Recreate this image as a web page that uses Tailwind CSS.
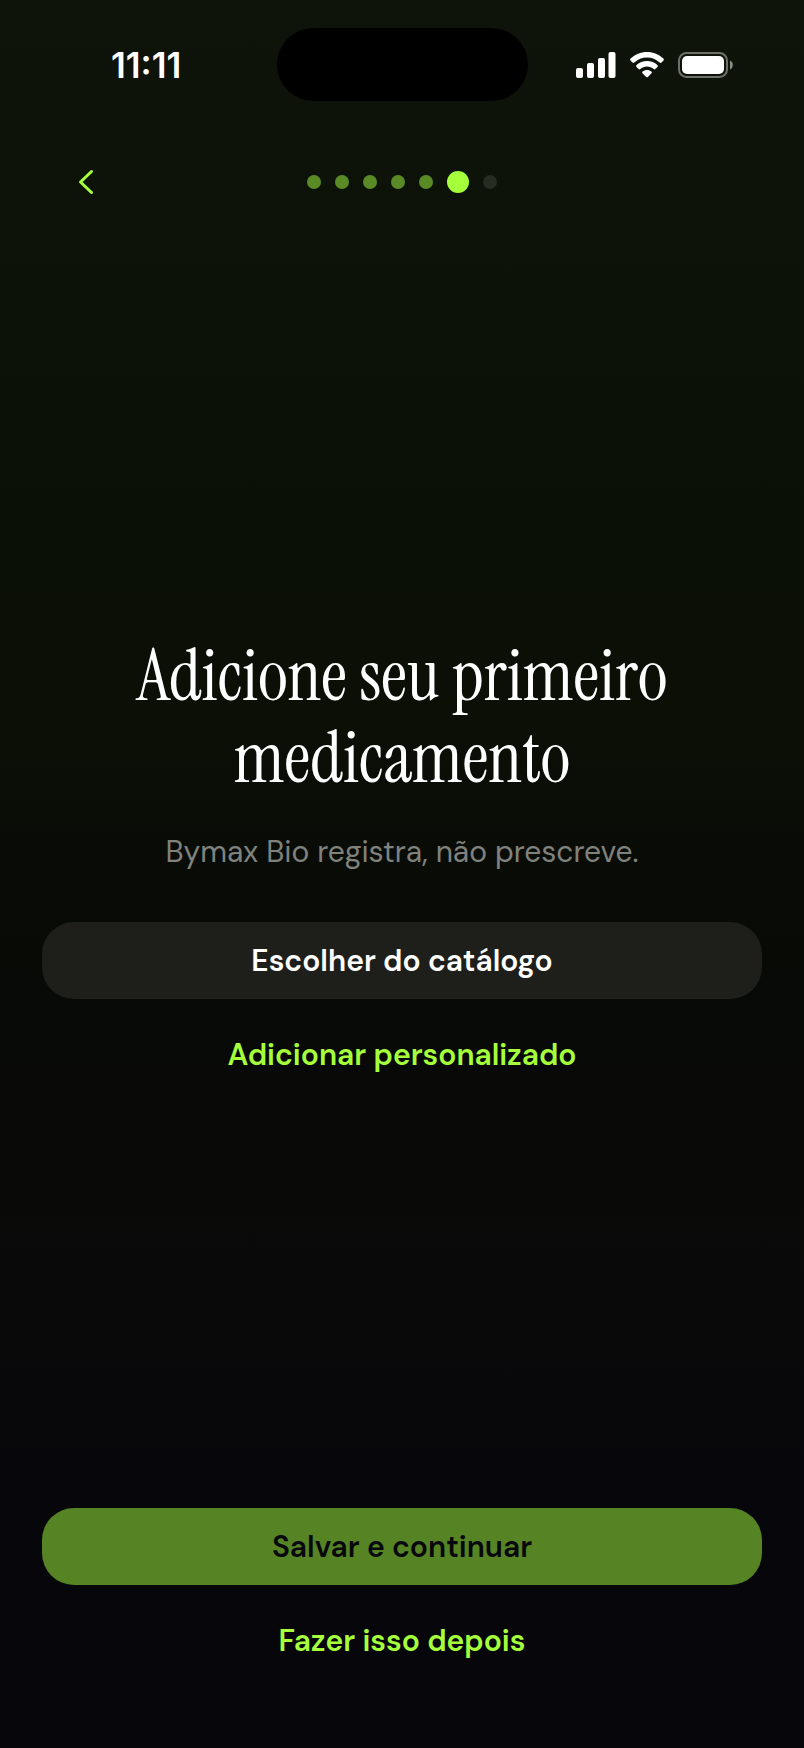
<!DOCTYPE html>
<html lang="pt-BR">
<head>
  <meta charset="UTF-8" />
  <meta name="viewport" content="width=device-width, initial-scale=1.0" />
  <title>Bymax Bio</title>
  <script src="https://cdn.jsdelivr.net/npm/@tailwindcss/browser@4"></script>
</head>
<body class="min-h-screen flex flex-col bg-[linear-gradient(to_bottom,#0e140a,#0b1107_25%,#0b0f06_42%,#080a06_54%,#090909_75%,#07060b_87%)] font-['DM_Sans','Inter',sans-serif] text-white">

  <!-- Status bar -->
  <div class="grid grid-cols-[1fr_251px_1fr] items-center pt-7">
    <time class="pl-[111px] font-['Inter',sans-serif] text-[35px] leading-10 font-semibold">11:11</time>
    <div class="h-[73px] rounded-full bg-black"></div>
    <div class="flex items-center justify-end gap-[14px] pr-[71px]">
      <svg class="w-10 h-[26px]" viewBox="0 0 40 26" fill="#fff" aria-hidden="true">
        <rect x="0" y="16" width="7" height="10" rx="2" />
        <rect x="11" y="11" width="7" height="15" rx="2" />
        <rect x="22" y="6" width="7" height="20" rx="2" />
        <rect x="32.5" y="0" width="7" height="26" rx="2" />
      </svg>
      <svg class="w-[34px] h-[26px]" viewBox="0 0 34 26" fill="#fff" aria-hidden="true">
        <path d="M17 0C10.6 0 4.900 2.500 .6 6.600c-.6.600-.6 1.400-.1 2l2 2c.5.500 1.300.500 1.800 0C7.700 7.400 12.100 5.500 17 5.500s9.300 1.900 12.700 5.100c.5.500 1.300.500 1.800 0l2-2c.5-.6.500-1.400-.1-2C29.100 2.500 23.400 0 17 0z" />
        <path d="M17 9c-4 0-7.600 1.500-10.400 4-.6.500-.6 1.400-.1 1.900l2.100 2.100c.5.500 1.200.500 1.700.100C12.100 15.500 14.400 14.500 17 14.500s4.900 1 6.700 2.600c.5.400 1.200.400 1.700-.1l2.100-2.100c.5-.5.500-1.400-.1-1.900C24.600 10.500 21 9 17 9z" />
        <path d="M17 18c-1.700 0-3.200.6-4.400 1.600-.6.500-.6 1.200-.1 1.700l3.600 3.600c.5.500 1.300.500 1.800 0l3.600-3.600c.5-.5.500-1.200-.1-1.700C20.200 18.600 18.700 18 17 18z" />
      </svg>
      <svg class="w-[55px] h-[26px]" viewBox="0 0 55 26" aria-hidden="true">
        <rect x="1" y="1" width="48" height="24" rx="7.500" fill="none" stroke="#6d706b" stroke-width="2" />
        <rect x="4" y="4" width="42" height="18" rx="5" fill="#fff" />
        <path d="M52 8.500c3.700 1.500 3.700 7.500 0 9z" fill="#8b8d89" />
      </svg>
    </div>
  </div>

  <!-- Step header -->
  <header class="grid grid-cols-[1fr_auto_1fr] items-center pt-9 px-[42px]">
    <button type="button" aria-label="Voltar" class="flex items-center justify-center w-[88px] h-[90px]">
      <svg class="w-4 h-[26px]" viewBox="0 0 16 26" fill="none" stroke="#a6ff3b" stroke-width="3" stroke-linecap="round" stroke-linejoin="round">
        <path d="M13.500 2.500 2.500 13l11 10.500" />
      </svg>
    </button>
    <div class="flex items-center gap-[14px]" role="img" aria-label="Etapa 6 de 7">
      <span class="size-[14px] rounded-full bg-[#598a25]"></span>
      <span class="size-[14px] rounded-full bg-[#598a25]"></span>
      <span class="size-[14px] rounded-full bg-[#598a25]"></span>
      <span class="size-[14px] rounded-full bg-[#598a25]"></span>
      <span class="size-[14px] rounded-full bg-[#598a25]"></span>
      <span class="size-[22px] rounded-full bg-[#a6ff3b]"></span>
      <span class="size-[14px] rounded-full bg-[#272c23]"></span>
    </div>
  </header>

  <!-- Content -->
  <main class="flex-1 flex flex-col justify-center px-[42px] pb-2 text-center">
    <h1 class="max-w-[600px] mx-auto font-['Instrument_Serif','Liberation_Serif',serif] text-[72px] leading-[82px]">Adicione seu primeiro medicamento</h1>
    <p class="mt-[33px] text-[30px] leading-10 text-[#80827e]">Bymax Bio registra, não prescreve.</p>
    <div class="mt-[50px] flex flex-col gap-[17px] text-[30px] font-semibold">
      <button type="button" class="h-[77px] rounded-[32px] bg-[#1e1f1b]">Escolher do catálogo</button>
      <button type="button" class="h-[77px] rounded-[32px] text-[#a6ff3b]">Adicionar personalizado</button>
    </div>
  </main>

  <!-- Bottom actions -->
  <footer class="flex flex-col gap-[17px] px-[42px] pb-[69px] text-[30px] font-semibold">
    <button type="button" class="h-[77px] rounded-[32px] bg-[#568424] text-[#08080c]">Salvar e continuar</button>
    <button type="button" class="h-[77px] rounded-[32px] text-[#a6ff3b]">Fazer isso depois</button>
  </footer>

</body>
</html>
